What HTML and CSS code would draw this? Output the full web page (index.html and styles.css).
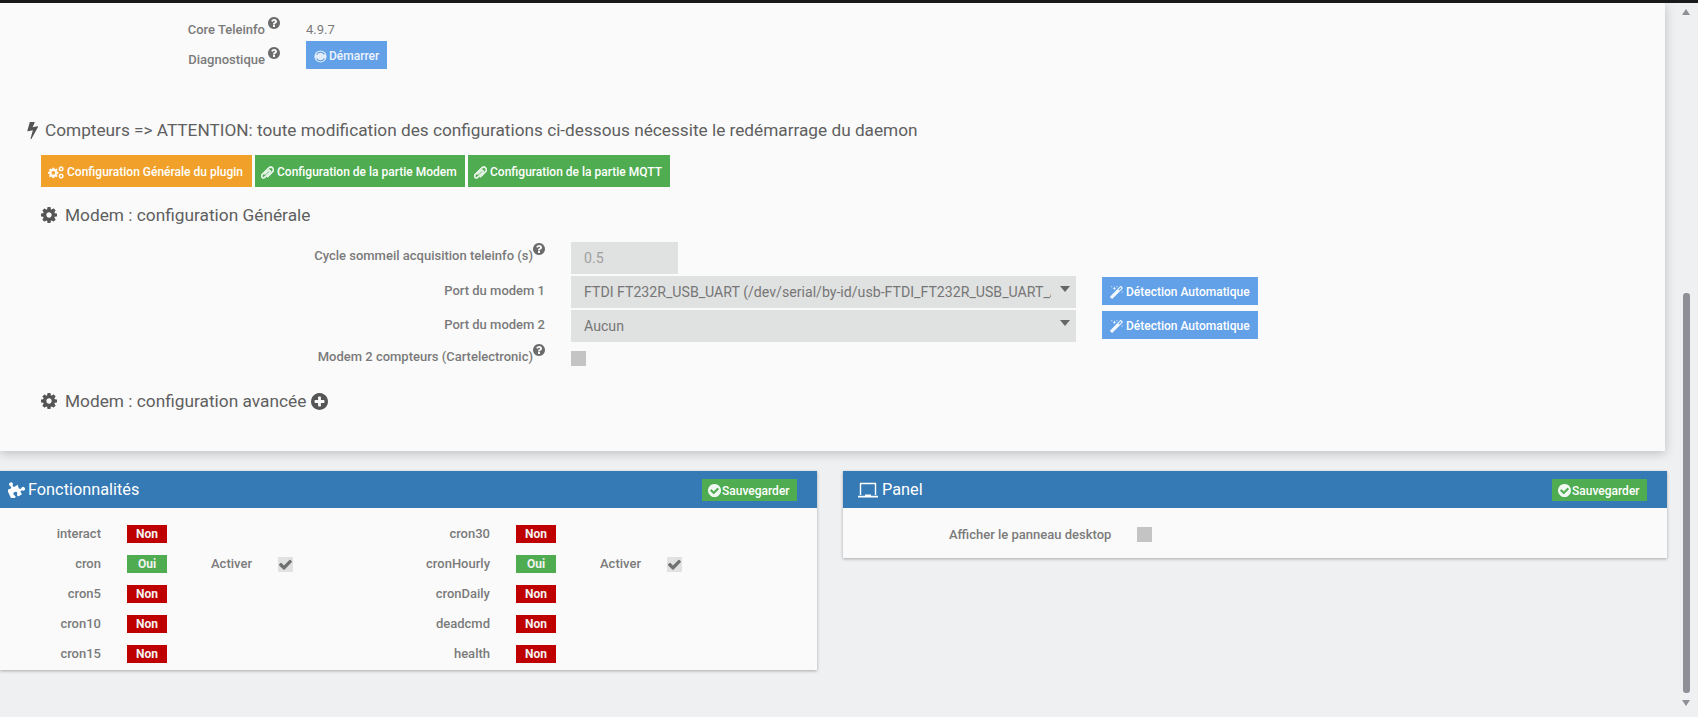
FILE: index.html
```html
<!DOCTYPE html>
<html lang="fr">
<head>
<meta charset="utf-8">
<title>Teleinfo</title>
<link rel="stylesheet" href="styles.css">
</head>
<body>
<svg class="defs" width="0" height="0" aria-hidden="true">
  <defs>
    <symbol id="i-help" viewBox="128 128 1536 1536"><path d="M1024 1376v-192q0-14-9-23t-23-9h-192q-14 0-23 9t-9 23v192q0 14 9 23t23 9h192q14 0 23-9t9-23zm256-672q0-88-55.5-163t-138.5-116-170-41q-243 0-371 213-15 24 8 42l132 100q7 6 19 6 16 0 25-12 53-68 86-92 34-24 86-24 48 0 85.5 26t37.5 59q0 38-20 61t-68 45q-63 28-115.5 86.5t-52.5 125.5v36q0 14 9 23t23 9h192q14 0 23-9t9-23q0-19 21.5-49.5t54.5-49.5q32-18 49-28.5t46-35 44.5-48 28-60.5 12.5-81zm384 192q0 209-103 385.5t-279.5 279.5-385.5 103-385.5-103-279.5-279.5-103-385.5 103-385.5 279.5-279.5 385.5-103 385.5 103 279.5 279.5 103 385.5z"/></symbol>
    <symbol id="i-bolt" viewBox="420 128 920 1664" preserveAspectRatio="none"><path d="M1333 566q18 20 7 44l-540 1157q-13 25-42 25-4 0-14-2-17-5-25.5-19t-4.5-30l197-808-406 101q-4 1-12 1-18 0-31-11-18-15-13-39l201-825q4-14 16-23t28-9h328q19 0 32 12.5t13 29.5q0 8-5 18l-171 463 396-98q8-2 12-2 19 0 34 15z"/></symbol>
    <symbol id="i-cog" viewBox="128 128 1536 1536"><path d="M1152 896q0-106-75-181t-181-75-181 75-75 181 75 181 181 75 181-75 75-181zm512-109v222q0 12-8 23t-20 13l-185 28q-19 54-39 91 35 50 107 138 10 12 10 25t-9 23q-27 37-99 108t-94 71q-12 0-26-9l-138-108q-44 23-91 38-16 136-29 186-7 28-36 28h-222q-14 0-24.5-8.5t-11.5-21.5l-28-184q-49-16-90-37l-141 107q-10 9-25 9-14 0-25-11-126-114-165-168-7-10-7-23 0-12 8-23 15-21 51-66.5t54-70.5q-27-50-41-99l-183-27q-13-2-21-12.5t-8-23.5v-222q0-12 8-23t19-13l186-28q14-46 39-92-40-57-107-138-10-12-10-24 0-10 9-23 26-36 98.5-107.5t94.5-71.5q13 0 26 10l138 107q44-23 91-38 16-136 29-186 7-28 36-28h222q14 0 24.5 8.5t11.5 21.5l28 184q49 16 90 37l142-107q9-9 24-9 13 0 25 10 129 119 165 170 7 8 7 22 0 12-8 23-15 21-51 66.5t-54 70.5q26 50 41 98l183 28q13 2 21 12.5t8 23.5z"/></symbol>
    <symbol id="i-cogs" viewBox="0 0 24 18"><use href="#i-cog" x="0" y="2" width="15" height="15"/><use href="#i-cog" x="14.5" y="0" width="8" height="8"/><use href="#i-cog" x="14.5" y="10" width="8" height="8"/></symbol>
    <symbol id="i-clip" viewBox="200 130 1400 1530"><path stroke="currentColor" stroke-width="90" d="M1596 1385q0 117-79 196t-196 79q-135 0-235-100l-777-776q-113-115-113-271 0-159 110-270t269-111q158 0 273 113l605 606q10 10 10 22 0 16-30.5 46.5t-46.5 30.5q-13 0-23-10l-606-607q-79-77-181-77-106 0-179 75t-73 181q0 105 76 181l776 777q63 63 145 63 64 0 106-42t42-106q0-82-63-145l-581-581q-26-24-60-24-29 0-48 19t-19 48q0 32 25 59l410 410q10 10 10 22 0 16-31 47t-47 31q-12 0-22-10l-410-410q-63-61-63-149 0-82 57-139t139-57q88 0 149 63l581 581q100 98 100 235z" transform="rotate(90 896 896)"/></symbol>
    <symbol id="i-magic" viewBox="90 30 1620 1620"><path d="M1254 581l293-293-107-107-293 293zm447-293q0 27-18 45l-1286 1286q-18 18-45 18t-45-18l-198-198q-18-18-18-45t18-45l1286-1286q18-18 45-18t45 18l198 198q18 18 18 45zm-1351-190l98 30-98 30-30 98-30-98-98-30 98-30 30-98zm350 162l196 60-196 60-60 196-60-196-196-60 196-60 60-196zm930 478l98 30-98 30-30 98-30-98-98-30 98-30 30-98zm-640-640l98 30-98 30-30 98-30-98-98-30 98-30 30-98z"/></symbol>
    <symbol id="i-ok" viewBox="128 128 1536 1536"><path d="M1412 734q0-28-18-46l-91-90q-19-19-45-19t-45 19l-408 407-226-226q-19-19-45-19t-45 19l-91 90q-18 18-18 46 0 27 18 45l362 362q19 19 45 19 27 0 46-19l543-543q18-18 18-45zm252 162q0 209-103 385.5t-279.5 279.5-385.5 103-385.5-103-279.5-279.5-103-385.5 103-385.5 279.5-279.5 385.5-103 385.5 103 279.5 279.5 103 385.5z"/></symbol>
    <symbol id="i-plus" viewBox="128 128 1536 1536"><path d="M1344 960v-128q0-26-19-45t-45-19h-256v-256q0-26-19-45t-45-19h-128q-26 0-45 19t-19 45v256h-256q-26 0-45 19t-19 45v128q0 26 19 45t45 19h256v256q0 26 19 45t45 19h128q26 0 45-19t19-45v-256h256q26 0 45-19t19-45zm320-64q0 209-103 385.5t-279.5 279.5-385.5 103-385.5-103-279.5-279.5-103-385.5 103-385.5 279.5-279.5 385.5-103 385.5 103 279.5 279.5 103 385.5z"/></symbol>
    <symbol id="i-check" viewBox="120 240 1560 1300"><path d="M1671 566q0 40-28 68l-724 724-136 136q-28 28-68 28t-68-28l-136-136-362-362q-28-28-28-68t28-68l136-136q28-28 68-28t68 28l294 295 656-657q28-28 68-28t68 28l136 136q28 28 28 68z"/></symbol>
    <symbol id="i-puzzle" viewBox="30 60 1740 1680"><g transform="rotate(-25 896 896)"><path d="M1664 1098q0 81-44.5 135t-123.5 54q-41 0-77.5-17.5t-59-38-56.5-38-71-17.5q-110 0-110 124 0 39 16 115t15 115v5q-22 0-33 1-34 3-97.5 11.5t-115.5 13.5-98 5q-61 0-103-26.5t-42-83.5q0-37 17.5-71t38-56.5 38-59 17.5-77.5q0-79-54-123.5t-135-44.5q-84 0-143 45.5t-59 127.5q0 43 15 83t33.5 64.5 33.5 53 15 50.5q0 45-46 89-37 35-117 35-95 0-245-24-9-2-27.5-4t-27.5-4l-13-2q-1 0-3-1-2 0-2-1v-1024q2 1 17.5 3.5t34 5 21.5 3.5q150 24 245 24 80 0 117-35 46-44 46-89 0-22-15-50.5t-33.5-53-33.5-64.5-15-83q0-82 59-127.5t144-45.5q80 0 134 44.5t54 123.5q0 41-17.5 77.5t-38 59-38 56.5-17.5 71q0 57 42 83.5t103 26.5q64 0 180-15t163-17v2q-1 2-3.5 17.5t-5 34-3.5 21.5q-24 150-24 245 0 80 35 117 44 46 89 46 22 0 50.5-15t53-33.5 64.5-33.5 83-15q82 0 127.5 59t45.5 143z"/></g></symbol>
  </defs>
</svg>

<div class="topbar"></div>
<div class="page">
  <main class="content">
    <section class="main-panel">
      <div class="info-row">
        <span class="info-label info-label-first">Core Teleinfo<svg class="help"><use href="#i-help"/></svg></span>
        <span class="info-value">4.9.7</span>
      </div>
      <div class="info-row info-row-btn">
        <span class="info-label info-label-low">Diagnostique<svg class="help"><use href="#i-help"/></svg></span>
        <button class="btn btn-blue btn-start" type="button">
          <svg class="ico ico-start" viewBox="0 0 12 12"><circle cx="6" cy="6" r="5.6" fill="currentColor"/><path class="start-cut" d="M2.4 4.2A4 4 0 0 1 9.6 4.2M2.4 7.8A4 4 0 0 0 9.6 7.8"/></svg>Démarrer
        </button>
      </div>

      <h2 class="section-title"><svg class="ico-bolt"><use href="#i-bolt"/></svg>Compteurs =&gt; ATTENTION: toute modification des configurations ci-dessous nécessite le redémarrage du daemon</h2>

      <div class="inner">
        <div class="tabs">
          <button class="btn btn-orange tab" type="button"><svg class="ico ico-cogs"><use href="#i-cogs"/></svg>Configuration Générale du plugin</button>
          <button class="btn btn-green tab" type="button"><svg class="ico"><use href="#i-clip"/></svg>Configuration de la partie Modem</button>
          <button class="btn btn-green tab" type="button"><svg class="ico"><use href="#i-clip"/></svg>Configuration de la partie MQTT</button>
        </div>

        <h3 class="sub-title"><svg class="ico-cog"><use href="#i-cog"/></svg>Modem : configuration Générale</h3>

        <form class="form-grid">
          <label class="form-label form-label-cycle">Cycle sommeil acquisition teleinfo (s)<svg class="help help-sup"><use href="#i-help"/></svg></label>
          <input class="field field-short" type="text" value="0.5" disabled>
          <span></span>

          <label class="form-label form-label-mid">Port du modem 1</label>
          <div class="select-wrap"><select class="field"><option>FTDI FT232R_USB_UART (/dev/serial/by-id/usb-FTDI_FT232R_USB_UART_A50285BI-if00-port0)</option></select></div>
          <button class="btn btn-blue btn-detect" type="button"><svg class="ico"><use href="#i-magic"/></svg>Détection Automatique</button>

          <label class="form-label form-label-mid">Port du modem 2</label>
          <div class="select-wrap"><select class="field"><option>Aucun</option></select></div>
          <button class="btn btn-blue btn-detect" type="button"><svg class="ico"><use href="#i-magic"/></svg>Détection Automatique</button>

          <label class="form-label form-label-top">Modem 2 compteurs (Cartelectronic)<svg class="help help-sup"><use href="#i-help"/></svg></label>
          <span class="check check-empty check-form"></span>
          <span></span>
        </form>

        <h3 class="sub-title sub-title-adv"><svg class="ico-cog"><use href="#i-cog"/></svg>Modem : configuration avancée<svg class="ico-plus"><use href="#i-plus"/></svg></h3>
      </div>
    </section>

    <div class="panels">
      <section class="panel">
        <header class="panel-head">
          <h3 class="panel-title"><svg class="ico-title ico-puzzle"><use href="#i-puzzle"/></svg>Fonctionnalités</h3>
          <button class="btn btn-green btn-save" type="button"><svg class="ico"><use href="#i-ok"/></svg>Sauvegarder</button>
        </header>
        <div class="features">
          <div class="feature"><span class="f-label">interact</span><span class="badge badge-no">Non</span></div>
          <div class="feature"><span class="f-label">cron</span><span class="badge badge-yes">Oui</span><span class="f-act">Activer</span><span class="check"><svg class="check-mark"><use href="#i-check"/></svg></span></div>
          <div class="feature"><span class="f-label">cron5</span><span class="badge badge-no">Non</span></div>
          <div class="feature"><span class="f-label">cron10</span><span class="badge badge-no">Non</span></div>
          <div class="feature"><span class="f-label">cron15</span><span class="badge badge-no">Non</span></div>
          <div class="feature"><span class="f-label">cron30</span><span class="badge badge-no">Non</span></div>
          <div class="feature"><span class="f-label">cronHourly</span><span class="badge badge-yes">Oui</span><span class="f-act">Activer</span><span class="check"><svg class="check-mark"><use href="#i-check"/></svg></span></div>
          <div class="feature"><span class="f-label">cronDaily</span><span class="badge badge-no">Non</span></div>
          <div class="feature"><span class="f-label">deadcmd</span><span class="badge badge-no">Non</span></div>
          <div class="feature"><span class="f-label">health</span><span class="badge badge-no">Non</span></div>
        </div>
      </section>

      <section class="panel panel-short">
        <header class="panel-head">
          <h3 class="panel-title panel-title-right"><svg class="ico-laptop" viewBox="0 0 20 16"><path d="M2.5 13V1.5h15V13" fill="none" stroke="currentColor" stroke-width="1.4"/><path d="M0 14.6h20M7 13.4h6" stroke="currentColor" stroke-width="1.6"/></svg>Panel</h3>
          <button class="btn btn-green btn-save" type="button"><svg class="ico"><use href="#i-ok"/></svg>Sauvegarder</button>
        </header>
        <div class="panel-option">
          <span class="f-label f-label-panel">Afficher le panneau desktop</span>
          <span class="check check-empty"></span>
        </div>
      </section>
    </div>
  </main>

  <aside class="scrollbar" aria-hidden="true">
    <span class="sb-up"></span>
    <span class="sb-thumb"></span>
    <span class="sb-down"></span>
  </aside>
</div>
</body>
</html>
```

FILE: styles.css
```css
* { box-sizing: border-box; }

html, body { height: 100%; }

body {
  margin: 0;
  overflow: hidden;
  background: #eff0f2;
  color: #666;
  font-family: Roboto, "Liberation Sans", sans-serif;
  font-size: 13px;
}

.defs { position: absolute; }

.topbar { height: 3px; background: #1a1a1a; }

.page { display: flex; align-items: flex-start; }

.content { width: 1667px; flex: none; }

/* main card */
.main-panel {
  width: 1665px;
  height: 448px;
  padding-top: 16px;
  background: #fafafa;
  box-shadow: 0 2px 10px rgba(0, 0, 0, .22);
}

.info-row { display: flex; align-items: center; height: 20px; }
.info-row-btn { align-items: flex-start; height: 28px; margin-top: 2px; }

.info-label {
  display: block;
  width: 280px;
  padding-left: 1px;
  text-align: right;
  color: #7a7a7a;
  font-weight: 500;
  white-space: nowrap;
}
.info-label-first { padding-bottom: 4px; }
.info-label-low { padding-top: 6px; }
.info-value { margin-left: 26px; color: #7a7a7a; }

.help { width: 12px; height: 12px; margin-left: 3px; vertical-align: 5px; fill: #6b6b6b; }
.help-sup { margin-left: 0; vertical-align: 5px; }

.section-title {
  display: flex;
  align-items: center;
  height: 24px;
  margin: 49px 0 0 27px;
  color: #5f5f5f;
  font-size: 17.23px;
  font-weight: 400;
  white-space: nowrap;
}
.ico-bolt { width: 11px; height: 17px; margin-right: 7px; fill: #555; }

.inner { margin-left: 41px; }

/* buttons */
.btn {
  display: inline-flex;
  align-items: center;
  border: 0;
  border-radius: 0;
  padding: 2px 0 0;
  color: #fff;
  font: 500 12px Roboto, "Liberation Sans", sans-serif;
  white-space: nowrap;
}
.btn-blue { background: #62a0e8; }
.btn-green { background: #4fac50; }
.btn-orange { background: #f1a12a; }

.ico { flex: none; width: 13px; height: 13px; margin-right: 3px; fill: currentColor; opacity: .92; }
.ico-cogs { width: 17px; margin-right: 2px; }

.btn-start { width: 81px; height: 28px; padding-left: 8px; margin-left: 26px; color: #eef4fc; }
.ico-start { margin-right: 2px; }
.start-cut { fill: none; stroke: #62a0e8; stroke-width: 1.1; }

.tabs { display: flex; gap: 3px; margin-top: 13px; }
.tab { height: 32px; padding-left: 7px; width: 211px; }
.tab:nth-child(2) { width: 210px; padding-left: 6px; }
.tab:nth-child(3) { width: 202px; padding-left: 6px; }

.sub-title {
  display: flex;
  align-items: center;
  height: 24px;
  margin: 16px 0 0;
  color: #5f5f5f;
  font-size: 17.3px;
  font-weight: 400;
  white-space: nowrap;
}
.ico-cog { width: 16px; height: 16px; margin-right: 8px; fill: #555; }
.ico-plus { width: 17px; height: 17px; margin-left: 5px; fill: #555; }
.sub-title-adv { margin-top: 23px; }

/* form */
.form-grid {
  display: grid;
  grid-template-columns: 504px 505px 156px;
  column-gap: 26px;
  row-gap: 2px;
  align-items: center;
  margin-top: 15px;
}
.form-label {
  text-align: right;
  color: #7a7a7a;
  font-weight: 500;
  white-space: nowrap;
}
.form-label-cycle { padding-bottom: 10px; }
.form-label-top { padding-bottom: 2px; }
.form-label-mid { padding-bottom: 4px; }

.field {
  display: block;
  width: 100%;
  height: 32px;
  padding: 0 25px 0 13px;
  border: 0;
  border-radius: 0;
  background: #e0e1e1;
  color: #767676;
  font: 400 14.15px Roboto, "Liberation Sans", sans-serif;
  appearance: none;
  outline: 0;
}
.field-short { width: 107px; color: #a0a0a0; }

.select-wrap { position: relative; }
.select-wrap::after {
  content: "";
  position: absolute;
  top: 10px;
  right: 6px;
  border-top: 6px solid #666;
  border-left: 5px solid transparent;
  border-right: 5px solid transparent;
}

.btn-detect { width: 156px; height: 28px; padding-left: 8px; margin-bottom: 2px; }

.check {
  display: flex;
  align-items: center;
  justify-content: center;
  width: 15px;
  height: 15px;
  background: #e0e1e1;
}
.check-empty { background: #c4c4c4; }
.check-form { margin-top: 7px; }
.check-mark { width: 13px; height: 11px; fill: #707070; }

/* bottom panels */
.panels {
  display: grid;
  grid-template-columns: 817px 824px;
  column-gap: 26px;
  align-items: start;
  margin-top: 20px;
}
.panel {
  background: #fafafa;
  box-shadow: 0 1px 3px rgba(0, 0, 0, .3);
}
.panel-head {
  display: flex;
  align-items: center;
  justify-content: space-between;
  height: 37px;
  padding: 0 20px 0 8px;
  background: #3579b5;
}
.panel-title {
  display: flex;
  align-items: center;
  margin: 0;
  color: #fff;
  font-size: 16.3px;
  font-weight: 400;
}
.panel-title-right { padding-left: 7px; }
.ico-title { width: 18px; height: 17px; margin-right: 2px; fill: #fff; }
.ico-laptop { width: 20px; height: 16px; margin-right: 4px; color: #fff; }

.btn-save { width: 95px; height: 22px; padding-left: 6px; }
.btn-save .ico { margin-right: 1px; }

.features {
  display: grid;
  grid-template-rows: repeat(5, 18px);
  grid-template-columns: 389px 389px;
  grid-auto-flow: column;
  row-gap: 12px;
  padding: 17px 0 7px;
}
.feature { display: grid; grid-template-columns: 101px 40px 59px 15px; align-items: center; column-gap: 26px; }
.feature .f-act { margin-left: 18px; }

.f-label { padding-bottom: 2px; text-align: right; color: #7b7b7b; font-weight: 500; white-space: nowrap; }
.f-act { padding-bottom: 2px; color: #7b7b7b; font-weight: 500; }

.badge {
  display: block;
  height: 18px;
  line-height: 18px;
  text-align: center;
  color: #f2f2f2;
  font-size: 12px;
  font-weight: 700;
}
.badge-no { background: #bf0000; }
.badge-yes { background: #4fac50; }

.panel-option {
  display: flex;
  align-items: center;
  height: 50px;
  padding: 2px 0 0 106px;
}
.f-label-panel { padding-bottom: 0; margin-right: 26px; }

/* scrollbar */
.scrollbar {
  display: flex;
  flex-direction: column;
  padding: 6px 0 0 15px;
}
.sb-up, .sb-down { width: 0; height: 0; border-left: 4.5px solid transparent; border-right: 4.5px solid transparent; }
.sb-up { border-bottom: 6px solid #8f8f98; }
.sb-down { margin-top: 7px; border-top: 6px solid #8f8f98; }
.sb-thumb { width: 7px; height: 400px; margin: 278px 0 0 1px; border-radius: 3px; background: #8f8f98; }
```
